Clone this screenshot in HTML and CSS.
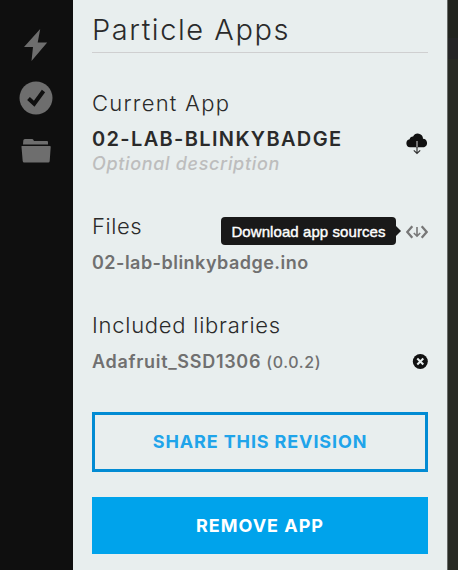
FILE: index.html
```html
<!DOCTYPE html>
<html lang="en">
<head>
<meta charset="utf-8">
<title>Particle Apps</title>
<link rel="stylesheet" href="styles.css">
</head>
<body>
<nav class="rail">
  <svg class="bolt" width="24" height="34" viewBox="0 0 24 34"><path d="M16.2 1 0 19h9L7.500 33 23.200 14.600h-9.500z"/></svg>
  <svg class="verify" width="34" height="34" viewBox="0 0 34 34"><circle cx="17" cy="17" r="16.500"/><path class="tick" d="m9.500 17.500 5.700 5.300L24.500 10"/></svg>
  <svg class="folder" width="30" height="26" viewBox="0 0 30 26"><path d="M2 6.500 2.300 2.500Q2.400 1 3.900 1H11q1 0 1.500 1l.4.900H26q1 0 1 1V6.500zM.800 8H29q.8 0 .7.900L28.700 23q-.1 1.500-1.500 1.500H3.200Q1.800 24.500 1.700 23L.500 9Q.4 8 .8 8z"/></svg>
</nav>
<main class="panel">
  <h1 class="title"><span>Particle Apps</span></h1>
  <section class="current">
    <h2>Current App</h2>
    <div class="row app-row">
      <div class="app-name">02-LAB-BLINKYBADGE</div>
      <svg class="cloud" width="22" height="22" viewBox="0 0 22 22"><path d="M4 14.200a4 4 0 0 1-.400-7.900A3.500 3.500 0 0 1 7.100 3.600 5.200 5.200 0 0 1 17 5.800 4.300 4.300 0 0 1 18 14.200z" fill="#111"/><path d="M11 8v6.500" stroke="#aaa" stroke-width="1.300"/><path d="M11 14v6.500M7.800 17.300l3.200 3.200 3.200-3.200" fill="none" stroke="#333" stroke-width="1.200"/></svg>
    </div>
    <p class="desc">Optional description</p>
  </section>
  <section class="files">
    <div class="row head-row">
      <h2 class="files-head">Files</h2>
      <div class="source">
        <div class="tooltip">Download app sources</div>
        <svg width="22" height="14" viewBox="0 0 22 14" fill="none" stroke="#777"><path d="M6.300 1.300 1.300 7l5 5.700M15.700 1.300l5 5.700-5 5.700" stroke-width="2.300"/><path d="M11 2v9M7.800 8l3.200 3.200L14.200 8" stroke-width="1.600"/></svg>
      </div>
    </div>
    <p class="item ino">02-lab-blinkybadge.ino</p>
  </section>
  <section class="libs">
    <h2 class="libs-head">Included libraries</h2>
    <div class="row lib-row">
      <p class="item"><span class="lib">Adafruit_SSD1306</span><span class="version">(0.0.2)</span></p>
      <svg width="16" height="16" viewBox="0 0 16 16"><circle cx="8.300" cy="7.500" r="7.500" fill="#111"/><path d="m5.300 4.500 6 6M11.300 4.500l-6 6" stroke="#e8eeee" stroke-width="2"/></svg>
    </div>
  </section>
  <button class="btn share"><span>SHARE THIS REVISION</span></button>
  <button class="btn remove"><span>REMOVE APP</span></button>
</main>
<aside class="editor"><div class="tabs"></div><div class="code"></div></aside>
</body>
</html>
```

FILE: styles.css
```css
* { box-sizing: border-box; }
body {
  margin: 0;
  display: flex;
  width: 458px;
  height: 570px;
  overflow: hidden;
  background: #0f0f0f;
  font-family: Inter, sans-serif;
  color: #2a2a2a;
}
h1, h2, p { margin: 0; }
svg { display: block; flex: none; }
.rail {
  width: 73px;
  padding-top: 28px;
  display: flex;
  flex-direction: column;
  align-items: center;
  flex: none;
  padding-right: 2px;
}
.rail svg { fill: #6e6e6e; }
.verify { margin-top: 19px; }
.folder { margin-top: 23px; }
.rail .tick { fill: none; stroke: #0f0f0f; stroke-width: 4; }
.panel {
  width: 374px;
  flex: none;
  padding: 10px 19px 0;
  background: #e8eeee;
}
.title {
  height: 43px;
  border-bottom: 1px solid #cfcfd0;
  font-size: 29px;
  line-height: 39px;
  font-weight: 300;
  letter-spacing: 1.55px;
}
h2 { font-size: 22px; line-height: 30px; font-weight: 300; letter-spacing: 1.25px; white-space: nowrap; }
h2.files-head { letter-spacing: .6px; }
h2.libs-head { letter-spacing: .75px; }
.row { display: flex; justify-content: space-between; align-items: center; }
.current { padding-top: 35px; height: 134px; }
.app-row { height: 38px; padding-top: 3px; }
.app-name { font-size: 20px; line-height: 26px; font-weight: 600; letter-spacing: 1.35px; }
.desc { margin-top: -4px; font-size: 18px; line-height: 24px; font-weight: 500; font-style: italic; letter-spacing: .66px; color: #bdbdbd; }
.cloud { margin-top: 10px; }
.files { padding-top: 24px; height: 99px; }
.head-row { height: 30px; }
.source { position: relative; padding-top: 11px; }
.tooltip {
  position: absolute;
  right: 32px;
  top: 3px;
  width: 175px;
  height: 28px;
  border-radius: 4px;
  background: #191919;
  color: #fff;
  font: 15px/29px "Liberation Sans", sans-serif;
  letter-spacing: .08px;
  -webkit-text-stroke: .4px #fff;
  text-align: center;
  white-space: nowrap;
}
.tooltip::after {
  content: "";
  position: absolute;
  left: 175px;
  top: 9px;
  border: 5px solid transparent;
  border-left-color: #191919;
  border-right: 0;
}
.item { font-size: 18px; line-height: 24px; font-weight: 600; letter-spacing: .48px; color: #707070; white-space: nowrap; }
.ino { margin-top: 10px; }
.libs { padding-top: 24px; height: 126px; }
.lib-row { height: 42px; padding-top: 1px; }
.lib { letter-spacing: .7px; }
.version { font-size: 16px; margin-left: 5px; letter-spacing: .65px; font-weight: 500; }
.btn {
  display: block;
  width: 336px;
  padding: 0;
  border: 0;
  font: 600 18px/24px Inter, sans-serif;
  letter-spacing: 1px;
}
.share { height: 60px; border: 3px solid #028bd3; background: none; color: #20a4ea; font-weight: 700; letter-spacing: .87px; }
.remove { height: 57px; margin-top: 25px; background: #00a3eb; color: #fff; font-weight: 700; }
.editor { width: 11px; flex: none; border-left: 1px solid #686b68; background: #282a24; }
.tabs { height: 59px; background: linear-gradient(#22241f 65%, #252526 65%); }
```
